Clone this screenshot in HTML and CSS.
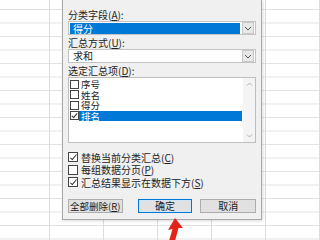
FILE: index.html
```html
<!DOCTYPE html>
<html lang="zh-CN">
<head>
<meta charset="UTF-8">
<title>分类汇总</title>
<link rel="stylesheet" href="styles.css">
</head>
<body>
  <div class="sheet"></div>

  <div class="dialog">
    <div class="label">分类字段(<u>A</u>):</div>
    <div class="combo">
      <div class="combo-value selected">得分</div>
      <div class="combo-btn"><svg width="8" height="5" viewBox="0 0 8 5"><path d="M1 1l3 3 3-3" fill="none" stroke="#555" stroke-width="1"/></svg></div>
    </div>

    <div class="label">汇总方式(<u>U</u>):</div>
    <div class="combo">
      <div class="combo-value">求和</div>
      <div class="combo-btn"><svg width="8" height="5" viewBox="0 0 8 5"><path d="M1 1l3 3 3-3" fill="none" stroke="#555" stroke-width="1"/></svg></div>
    </div>

    <div class="label">选定汇总项(<u>D</u>):</div>
    <div class="listbox">
      <div class="items">
        <div class="item"><span class="box"></span><span class="item-text">序号</span></div>
        <div class="item"><span class="box"></span><span class="item-text">姓名</span></div>
        <div class="item"><span class="box"></span><span class="item-text">得分</span></div>
        <div class="item"><span class="box checked"></span><span class="item-text active">排名</span></div>
      </div>
      <div class="scrollbar">
        <svg width="7" height="4" viewBox="0 0 7 4"><path d="M1 3.5l2.5-2.5 2.5 2.5" fill="none" stroke="#b0b0b0" stroke-width="1"/></svg>
        <svg width="7" height="4" viewBox="0 0 7 4"><path d="M1 0.5l2.5 2.5 2.5-2.5" fill="none" stroke="#b0b0b0" stroke-width="1"/></svg>
      </div>
    </div>

    <div class="options">
      <div class="option"><span class="box big checked"></span>替换当前分类汇总(<u>C</u>)</div>
      <div class="option"><span class="box big"></span>每组数据分页(<u>P</u>)</div>
      <div class="option"><span class="box big checked"></span>汇总结果显示在数据下方(<u>S</u>)</div>
    </div>

    <div class="buttons">
      <button class="btn wide">全部删除(<u>R</u>)</button>
      <button class="btn focus">确定</button>
      <button class="btn cancel">取消</button>
    </div>
  </div>

  <svg class="arrow" width="20" height="26" viewBox="0 0 20 26">
    <polygon points="7,0 15,10 10.5,10 7,23 1,23 4.5,11 0,12" fill="#e3241b"/>
  </svg>
</body>
</html>
```

FILE: styles.css
```css
body {
  margin: 0;
  width: 320px;
  height: 240px;
  overflow: hidden;
  background: #fff;
  font-family: "Noto Sans CJK SC", "Liberation Sans", sans-serif;
  font-size: 10px;
  color: #222;
  position: relative;
}
.sheet {
  width: 320px;
  height: 240px;
  background:
    linear-gradient(to right, #dcdcdc 1px, transparent 1px) 49px 0 / 54px 100%,
    linear-gradient(to bottom, #e2e2e2 1px, transparent 1px) 0 9px / 100% 13.5px;
}
.dialog {
  position: absolute;
  left: 62px;
  top: 0;
  width: 188px;
  height: 210px;
  padding: 9px 5px 0 5px;
  background: #f0f0f0;
  border: 1px solid #a8a8a8;
  border-top: none;
  box-shadow: 1px 1px 3px rgba(0, 0, 0, 0.15);
  display: flex;
  flex-direction: column;
}
.label {
  height: 12px;
  line-height: 12px;
}
.combo {
  height: 12px;
  margin: 0 0 1px 0;
  border: 1px solid #c4c4c4;
  background: #fff;
  display: flex;
  padding: 0 1px 0 1px;
}
.combo-value {
  flex: 1;
  line-height: 12px;
  padding: 0 3px;
}
.combo-value.selected {
  background: #0078d7;
  color: #fff;
  margin: 1px 1px 0 0;
  line-height: 11px;
  height: 11px;
}
.combo-btn {
  width: 12px;
  margin: 0 0 0 1px;
  border: 1px solid #c8c8c8;
  background: #e8e8e8;
  display: flex;
  align-items: center;
  justify-content: center;
  box-sizing: border-box;
}
.combo + .label {
  margin-top: 1px;
}
.listbox {
  height: 64px;
  border: 1px solid #bdbdbd;
  background: #fff;
  display: flex;
}
.items {
  flex: 1;
  padding: 1px 0 0 1px;
}
.item {
  height: 10.5px;
  display: flex;
  align-items: center;
}
.item-text {
  flex: 1;
  height: 10.5px;
  font-size: 9.5px;
  line-height: 10.5px;
  padding-left: 2px;
}
.item-text.active {
  background: #0078d7;
  color: #fff;
  margin-right: 1px;
}
.box {
  width: 9px;
  height: 9px;
  border: 1px solid #444;
  background: #fff;
  box-sizing: border-box;
  position: relative;
  flex: none;
}
.box.checked::after {
  content: "";
  position: absolute;
  left: 2px;
  top: 0;
  width: 2px;
  height: 5px;
  border-right: 1px solid #333;
  border-bottom: 1px solid #333;
  transform: rotate(40deg);
}
.box.big {
  width: 10px;
  height: 10px;
  margin-right: 3px;
}
.box.big.checked::after {
  left: 3px;
  top: 0;
  height: 6px;
}
.scrollbar {
  width: 12px;
  background: #f4f4f4;
  display: flex;
  flex-direction: column;
  align-items: center;
  justify-content: space-between;
  padding: 4px 0;
}
.options {
  margin-top: 8px;
  display: flex;
  flex-direction: column;
}
.option {
  height: 12.5px;
  display: flex;
  align-items: center;
  white-space: nowrap;
}
.buttons {
  margin-top: 10px;
  display: flex;
}
.btn {
  width: 55px;
  height: 14px;
  padding: 0;
  font-family: inherit;
  font-size: 10px;
  color: #222;
  background: #e1e1e1;
  border: 1px solid #adadad;
  line-height: 12px;
  white-space: nowrap;
}
.btn.wide {
  font-size: 9.5px;
}
.btn.focus {
  margin-left: 15px;
  border: 1px solid #0078d7;
  box-shadow: inset 0 0 0 1px #cfe4f7;
}
.btn.cancel {
  width: 56px;
  margin-left: 8px;
}
.arrow {
  position: absolute;
  left: 168px;
  top: 218px;
}
```
